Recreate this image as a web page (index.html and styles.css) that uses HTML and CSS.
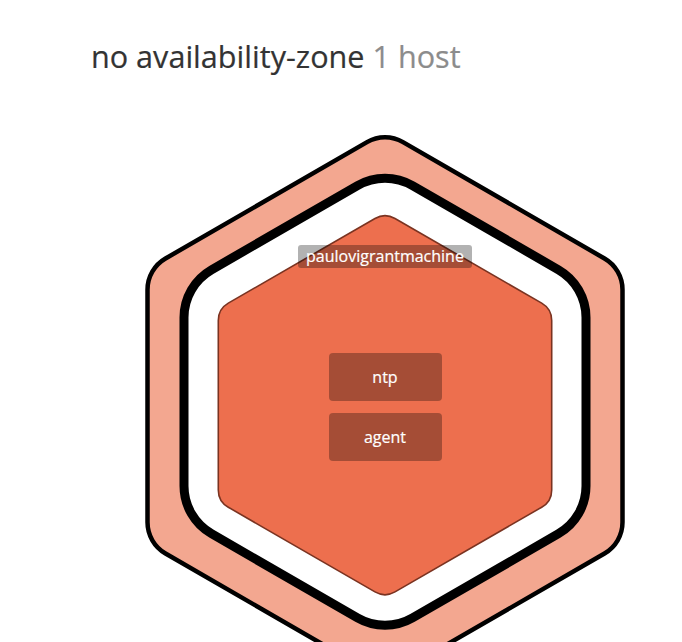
FILE: index.html
```html
<!DOCTYPE html>
<html lang="en">
<head>
<meta charset="utf-8">
<title>no availability-zone</title>
<link rel="stylesheet" href="styles.css">
</head>
<body>
<div class="stage">
  <svg class="hexes" viewBox="0 0 682 642" xmlns="http://www.w3.org/2000/svg">
    <path class="hex-outer" d="M403,142.15 L604.5,258.49 A36,36 0 0 1 622.5,289.66 L622.5,522.34 A36,36 0 0 1 604.5,553.51 L403,669.85 A36,36 0 0 1 367,669.85 L165.5,553.51 A36,36 0 0 1 147.5,522.34 L147.5,289.66 A36,36 0 0 1 165.5,258.49 L367,142.15 A36,36 0 0 1 403,142.15 Z"/>
    <path class="hex-inner" d="M412.5,185.53 L558.5,269.82 A55,55 0 0 1 586,317.45 L586,486.05 A55,55 0 0 1 558.5,533.68 L412.5,617.97 A55,55 0 0 1 357.5,617.97 L211.5,533.68 A55,55 0 0 1 184,486.05 L184,317.45 A55,55 0 0 1 211.5,269.82 L357.5,185.53 A55,55 0 0 1 412.5,185.53 Z"/>
    <path class="hex-machine" d="M395,218.47 L541.7,303.18 A20,20 0 0 1 551.7,320.5 L551.7,489.9 A20,20 0 0 1 541.7,507.22 L395,591.93 A20,20 0 0 1 375,591.93 L228.3,507.22 A20,20 0 0 1 218.3,489.9 L218.3,320.5 A20,20 0 0 1 228.3,303.18 L375,218.47 A20,20 0 0 1 395,218.47 Z"/>
  </svg>
  <h1 class="zone-title">no availability-zone <span class="count">1 host</span></h1>
  <div class="machine">
    <div class="host-label">paulovigrantmachine</div>
    <ul class="units">
      <li class="unit">ntp</li>
      <li class="unit">agent</li>
    </ul>
  </div>
</div>
</body>
</html>
```
FILE: styles.css
```css
body {
  margin: 0;
  background: #ffffff;
  font-family: "Open Sans", "DejaVu Sans", sans-serif;
}

.stage {
  position: relative;
  width: 682px;
  height: 642px;
  overflow: hidden;
}

.hexes {
  position: absolute;
  left: 0;
  top: 0;
  width: 682px;
  height: 642px;
}

.hex-outer {
  fill: #f3a790;
  stroke: #000000;
  stroke-width: 4.5;
}

.hex-inner {
  fill: #ffffff;
  stroke: #000000;
  stroke-width: 9;
}

.hex-machine {
  fill: #ed6f4e;
  stroke: #7a3321;
  stroke-width: 1.6;
}

.zone-title {
  position: relative;
  margin: 36px 0 0 91px;
  font-size: 30.6px;
  line-height: 40px;
  font-weight: 400;
  color: #333333;
  -webkit-text-stroke: 0.2px #333333;
}

.count {
  color: #8c8c8c;
  -webkit-text-stroke: 0.2px #8c8c8c;
}

.machine {
  position: relative;
  width: 340px;
  margin: 169px 0 0 215px;
  display: flex;
  flex-direction: column;
  align-items: center;
}

.host-label {
  height: 23px;
  line-height: 23px;
  padding: 0 8px;
  font-size: 16px;
  color: #ffffff;
  -webkit-text-stroke: 0.2px #ffffff;
  background: rgba(0, 0, 0, 0.3);
  border-radius: 3px;
}

.units {
  list-style: none;
  margin: 85px 0 0;
  padding: 0;
  display: flex;
  flex-direction: column;
  gap: 12px;
}

.unit {
  width: 113px;
  height: 48px;
  line-height: 48px;
  text-align: center;
  font-size: 16px;
  color: #ffffff;
  -webkit-text-stroke: 0.2px #ffffff;
  background: rgba(0, 0, 0, 0.3);
  border-radius: 4px;
}
```
